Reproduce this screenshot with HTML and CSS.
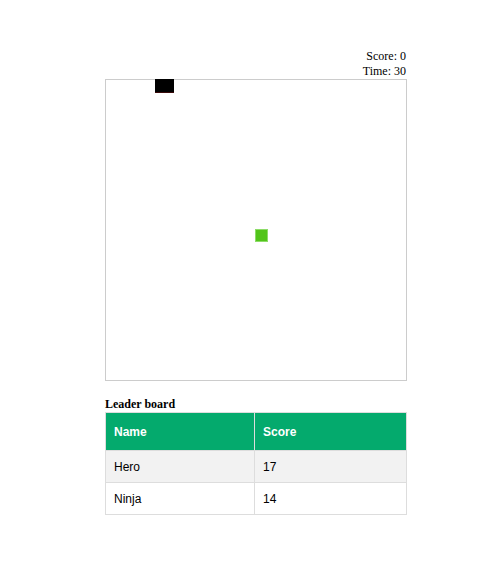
FILE: index.html
```html
<!DOCTYPE html>
<html>
<head>
<meta charset="utf-8">
<link rel="stylesheet" href="styles.css">
</head>
<body>
<div class="game">
  <div class="stats">
    <div>Score: 0</div>
    <div>Time: 30</div>
  </div>
  <div class="board">
    <div class="snake"></div>
    <div class="food"></div>
  </div>
  <div class="lb-title">Leader board</div>
  <table class="lb">
    <colgroup><col class="c1"><col class="c2"></colgroup>
    <tr><th>Name</th><th>Score</th></tr>
    <tr><td>Hero</td><td>17</td></tr>
    <tr><td>Ninja</td><td>14</td></tr>
  </table>
</div>
</body>
</html>
```

FILE: styles.css
```css
html, body {
  margin: 0;
  padding: 0;
  background: #fff;
}
body {
  font-family: "Liberation Serif", "Times New Roman", serif;
  font-size: 12px;
  line-height: 15px;
  color: #000;
}
.game {
  width: 302px;
  margin-left: 105px;
  padding-top: 49px;
}
.stats {
  text-align: right;
  margin-right: 1px;
}
.board {
  position: relative;
  width: 300px;
  height: 300px;
  border: 1px solid #cccccc;
}
.snake {
  position: absolute;
  left: 49px;
  top: -1px;
  width: 19px;
  height: 13px;
  background: #000;
  border-bottom: 1px solid #3a0a0a;
}
.food {
  position: absolute;
  left: 149px;
  top: 149px;
  width: 11px;
  height: 11px;
  background: #52c41a;
  border: 1px solid #8ddc68;
}
.lb-title {
  font-weight: bold;
  margin-top: 16px;
  margin-bottom: 0;
}
.lb {
  border-collapse: collapse;
  width: 301px;
  table-layout: fixed;
  font-family: "Liberation Sans", Arial, sans-serif;
  font-size: 12px;
  line-height: 14px;
}
.c1 { width: 149px; }
.c2 { width: 152px; }
.lb th, .lb td {
  border: 1px solid #dddddd;
  padding: 9px 8px 8px;
  text-align: left;
}
.lb th {
  padding-top: 12px;
  padding-bottom: 11px;
  background: #04aa6d;
  color: #fff;
  font-weight: bold;
}
.lb tr:nth-child(even) {
  background: #f2f2f2;
}
```
